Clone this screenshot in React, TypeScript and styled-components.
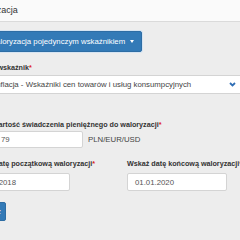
import React from 'react';
import styled, { createGlobalStyle } from 'styled-components';

const GlobalStyle = createGlobalStyle`
  html, body {
    margin: 0;
    padding: 0;
    background: #ededed;
    overflow: hidden;
  }
  body {
    font-family: "Liberation Sans", Arial, sans-serif;
    color: #333;
  }
`;

const Page = styled.div`
  margin-left: -40px;
  width: 320px;
`;

const Header = styled.div`
  height: 21px;
  line-height: 21px;
  background: #fafafa;
  border-bottom: 1px solid #dadada;
  padding-left: 9px;
  font-size: 9px;
  color: #333;
`;

const Main = styled.div`
  padding-top: 8px;
  display: flex;
  flex-direction: column;
`;

interface OffsetProps {
  $left: number;
}

const Row = styled.div<OffsetProps>`
  margin-left: ${p => p.$left}px;
`;

const DropButton = styled.button`
  display: inline-flex;
  align-items: center;
  gap: 5px;
  height: 21px;
  padding: 0 7px 0 6px;
  background: #337ab7;
  color: #fff;
  border: 1px solid #2e6da4;
  border-radius: 2px;
  box-shadow: 0 0 0 1px #d6e4f2;
  font-family: "Liberation Sans", Arial, sans-serif;
  font-size: 7.8px;
`;

const Caret = styled.span`
  width: 0;
  height: 0;
  border-left: 2.5px solid transparent;
  border-right: 2.5px solid transparent;
  border-top: 3px solid #fff;
`;

const Label = styled.div<{ $top: number }>`
  margin-top: ${p => p.$top}px;
  height: 10px;
  line-height: 10px;
  font-size: 7.2px;
  font-weight: bold;
  color: #333;
  white-space: nowrap;
`;

const Req = styled.span`
  color: #e02020;
`;

const Select = styled.div`
  margin-top: 2px;
  height: 19px;
  width: 290px;
  box-sizing: border-box;
  background: #fff;
  border: 1px solid #d4d4d4;
  border-radius: 2px;
  display: flex;
  align-items: center;
  padding-left: 25px;
  font-size: 7.8px;
  color: #444;
`;

const SelectText = styled.span`
  flex: 1;
  white-space: nowrap;
`;

const Chevron = styled.svg`
  margin-right: 21px;
`;

const InputLine = styled.div`
  margin-top: 1px;
  display: flex;
  align-items: center;
  gap: 5px;
`;

const Field = styled.div<{ $w: number; $h: number; $pad: number }>`
  width: ${p => p.$w}px;
  height: ${p => p.$h}px;
  box-sizing: border-box;
  background: #fff;
  border: 1px solid #d4d4d4;
  border-radius: 2px;
  padding-left: ${p => p.$pad}px;
  display: flex;
  align-items: center;
  font-size: 7.8px;
  color: #555;
`;

const Unit = styled.span`
  font-size: 7.8px;
  color: #444;
`;

const Columns = styled.div`
  display: flex;
  gap: 57px;
`;

const Column = styled.div`
  display: flex;
  flex-direction: column;
  width: 100px;
`;

const DateField = styled(Field)`
  margin-top: 4px;
`;

const Submit = styled.button`
  margin-top: 11px;
  height: 19px;
  width: 36px;
  background: #337ab7;
  color: #fff;
  border: 1px solid #2e6da4;
  border-radius: 2px;
  font-family: "Liberation Sans", Arial, sans-serif;
  font-size: 7.8px;
  padding: 0 4px 0 0;
  text-align: right;
`;

export default function App() {
  return (
    <Page>
      <GlobalStyle />
      <Header>Waloryzacja</Header>
      <Main>
        <Row $left={22}>
          <DropButton>
            Waloryzacja pojedynczym wskaźnikiem <Caret />
          </DropButton>
        </Row>

        <Row $left={8}>
          <Label $top={11}>
            Wybierz wskaźnik<Req>*</Req>
          </Label>
          <Select>
            <SelectText>Inflacja - Wskaźniki cen towarów i usług konsumpcyjnych</SelectText>
            <Chevron width="7" height="5" viewBox="0 0 7 5">
              <polyline points="1,1 3.5,3.5 6,1" fill="none" stroke="#2f6eb5" strokeWidth="1.8" />
            </Chevron>
          </Select>
        </Row>

        <Row $left={32}>
          <Label $top={26}>
            Wartość świadczenia pieniężnego do waloryzacji<Req>*</Req>
          </Label>
          <InputLine>
            <Field $w={91} $h={17} $pad={8}>
              79
            </Field>
            <Unit>PLN/EUR/USD</Unit>
          </InputLine>
        </Row>

        <Row $left={10}>
          <Columns>
            <Column>
              <Label $top={11}>
                Wskaż datę początkową waloryzacji<Req>*</Req>
              </Label>
              <DateField $w={100} $h={18} $pad={6}>
                01.01.2018
              </DateField>
              <Submit>Oblicz</Submit>
            </Column>
            <Column>
              <Label $top={11}>
                Wskaż datę końcową waloryzacji<Req>*</Req>
              </Label>
              <DateField $w={100} $h={18} $pad={7}>
                01.01.2020
              </DateField>
            </Column>
          </Columns>
        </Row>
      </Main>
    </Page>
  );
}
